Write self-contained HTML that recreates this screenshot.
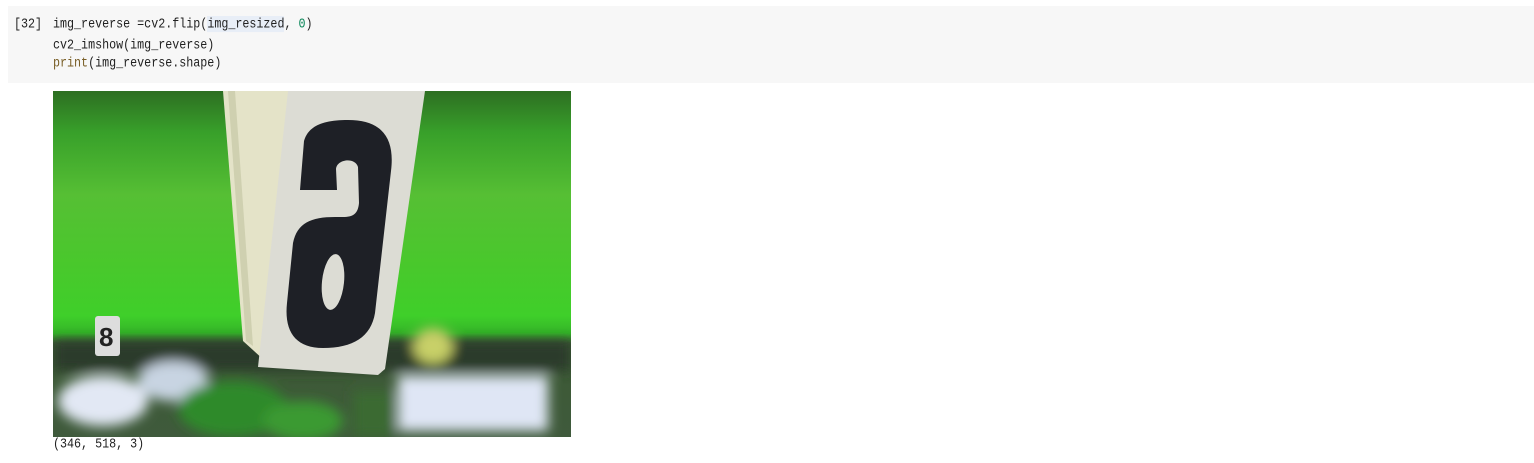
<!DOCTYPE html>
<html><head><style>
body{margin:0;background:#fff;width:1534px;height:463px;overflow:hidden;position:relative;font-family:"Liberation Mono",monospace;}
.cell{position:absolute;left:8px;top:6px;width:1526px;height:77px;background:#f7f7f7;}
.t{position:absolute;font-size:11.7px;color:#212121;white-space:pre;line-height:14px;transform:scaleY(1.15);transform-origin:top left;}
</style></head><body>
<div class="cell"></div>
<div class="t" style="left:14px;top:16px">[32]</div>
<div class="t" style="left:53px;top:16px">img_reverse =cv2.flip(<span style="background:#e8eef7">img_resized</span>, <span style="color:#098658">0</span>)</div>
<div class="t" style="left:53px;top:37px">cv2_imshow(img_reverse)</div>
<div class="t" style="left:53px;top:55px"><span style="color:#795e26">print</span>(img_reverse.shape)</div>
<svg style="position:absolute;left:53px;top:91px" width="518" height="346" viewBox="0 0 518 346">
<defs>
<linearGradient id="g" x1="0" y1="0" x2="0" y2="1">
<stop offset="0" stop-color="#2d6e22"/><stop offset="0.12" stop-color="#38a02a"/>
<stop offset="0.3" stop-color="#56bf34"/><stop offset="0.5" stop-color="#49c82c"/>
<stop offset="0.65" stop-color="#3fcf2a"/><stop offset="0.7" stop-color="#34b428"/>
<stop offset="0.73" stop-color="#3c5a34"/><stop offset="1" stop-color="#3f5a3c"/></linearGradient>
<filter id="b"><feGaussianBlur stdDeviation="6"/></filter>
</defs>
<rect width="518" height="346" fill="url(#g)"/>
<g filter="url(#b)">
<rect x="0" y="250" width="518" height="30" fill="#2c3a2a"/>
<ellipse cx="50" cy="310" rx="45" ry="25" fill="#e2e8f4"/>
<ellipse cx="120" cy="290" rx="35" ry="20" fill="#c8d4e2"/>
<ellipse cx="180" cy="318" rx="55" ry="28" fill="#2f8a2a"/>
<ellipse cx="250" cy="330" rx="40" ry="20" fill="#3a9a30"/>
<rect x="345" y="285" width="150" height="55" fill="#dfe6f5"/>
<ellipse cx="380" cy="255" rx="20" ry="18" fill="#c8d068"/>
<rect x="300" y="300" width="40" height="46" fill="#3a6a30"/>
</g>
<rect x="42" y="225" width="25" height="40" fill="#ddd" rx="3"/>
<text x="46" y="255" font-size="26" font-family="Liberation Sans" font-weight="bold" fill="#222">8</text>
<polygon points="170,0 237,0 212,270 190,250" fill="#e4e3c8"/>
<polygon points="175,0 182,0 200,255 193,250" fill="#cfd0b0"/>
<polygon points="235,0 372,0 332,278 325,284 205,276" fill="#dcdcd4"/>
<path d="M247,99 L251,50 C255,36 268,29 295,29 C330,29 342,48 338,80 L322,222 C318,246 300,257 270,257 C242,257 231,240 234,212 L240,152 C244,132 258,126 282,126 Z" fill="#1e2026"/>
<path d="M284,99 L283,78 C284,68 302,66 305,76 L306,112 C305,123 300,126 290,126 L238,126 L245,99 Z" fill="#dcdcd4"/>
<ellipse cx="280" cy="191" rx="11" ry="28" fill="#dcdcd4" transform="rotate(6 280 191)"/>
</svg>
<div class="t" style="left:53px;top:436px">(346, 518, 3)</div>
</body></html>
